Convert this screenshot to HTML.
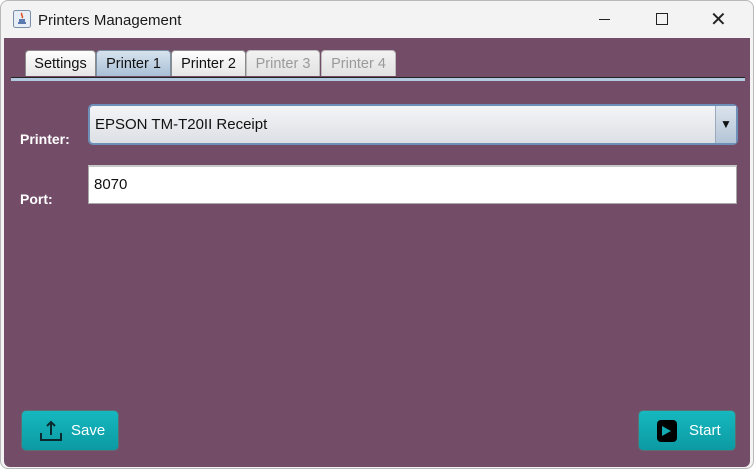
<!DOCTYPE html>
<html><head><style>
body{margin:0;width:754px;height:469px;background:#fff;font-family:"Liberation Sans",sans-serif;position:relative;overflow:hidden}
.win{position:absolute;left:0;top:0;width:752px;height:467px;border:1px solid #b8b8b8;border-radius:8px;background:#f3f3f3;overflow:hidden}
.title{position:absolute;left:37px;top:11px;font-size:15px;color:#1a1a1a}
.content{position:absolute;left:3px;top:37px;width:746px;height:429px;background:#734c68;border-radius:0 0 6px 6px}
.tab{position:absolute;top:12px;height:26px;border:1px solid #8a8a8a;border-bottom:none;border-radius:4px 4px 0 0;background:linear-gradient(#fdfdfd,#e6e6e6);font-size:14.5px;text-align:center;line-height:26px;color:#111;box-sizing:border-box}
.dis{color:#9a9a9a;background:linear-gradient(#f2f2f2,#e2e2e2);border-color:#bcbcbc}
.sel{background:linear-gradient(#d7e3ee,#a9c0d6);border-color:#7b8fa3}
.line{position:absolute;left:7px;top:39px;width:734px;height:3px;background:#b3c9df;border-top:1px solid #222}
.lbl{position:absolute;left:16px;color:#fff;font-weight:bold;font-size:14px}
.combo{position:absolute;left:84px;top:66px;width:650px;height:41px;box-sizing:border-box;border:2px solid #6e8fb8;border-radius:5px;background:linear-gradient(#f4f5f7,#dcdfe4);font-size:15px;line-height:37px;padding-left:5px;color:#111}
.arrow{position:absolute;right:0;top:0;width:20px;height:37px;border-left:1px solid #9aa9bb;background:linear-gradient(#dbe3ec,#b4c5d6);font-size:12px;text-align:center}
.field{position:absolute;left:84px;top:127px;width:649px;height:39px;box-sizing:border-box;border:1px solid #a8a8a8;border-top:2px solid #c8c8c8;background:#fff;font-size:15px;line-height:36px;padding-left:5px;color:#111}
.btn{position:absolute;top:373px;width:96px;height:39px;border-radius:4px;background:linear-gradient(#16b8bf,#0c9aa3);box-shadow:0 0 0 1px #5d6d72;color:#fff;font-size:15px;box-sizing:border-box}
</style></head><body>
<div class="win">
<svg style="position:absolute;left:12px;top:9px" width="18" height="18"><rect x="0.5" y="0.5" width="17" height="17" rx="2" fill="#e8eef5" stroke="#7a8ea8"/><path d="M5 12h8v2H5zM6 9h6v3H6z" fill="#5a7ab0"/><path d="M9 3c-2 2 2 3 0 5" stroke="#e05020" fill="none" stroke-width="1.5"/></svg>
<div class="title">Printers Management</div>
<div style="position:absolute;left:598px;top:18px;width:11px;height:1px;background:#222"></div>
<div style="position:absolute;left:655px;top:12px;width:10px;height:10px;border:1px solid #222"></div>
<div style="position:absolute;left:709px;top:6px;font-size:20px;color:#222">✕</div>
<div class="content">
<div class="tab" style="left:21px;width:71px">Settings</div>
<div class="tab sel" style="left:92px;width:75px">Printer 1</div>
<div class="tab" style="left:167px;width:75px">Printer 2</div>
<div class="tab dis" style="left:242px;width:74px">Printer 3</div>
<div class="tab dis" style="left:317px;width:75px">Printer 4</div>
<div class="line"></div>
<div class="lbl" style="top:93px">Printer:</div>
<div class="combo">EPSON TM-T20II Receipt<div class="arrow">▼</div></div>
<div class="lbl" style="top:153px">Port:</div>
<div class="field">8070</div>
<div class="btn" style="left:18px"><svg style="position:absolute;left:18px;top:9px" width="22" height="22"><path d="M11 2v13M7 6l4-4 4 4" stroke="#0a2a2e" stroke-width="2" fill="none"/><path d="M1 13v7h20v-7" stroke="#0a2a2e" stroke-width="2" fill="none"/></svg><span style="position:absolute;left:49px;top:11px">Save</span></div>
<div class="btn" style="left:635px"><svg style="position:absolute;left:17px;top:9px" width="22" height="22"><rect x="1" y="0" width="20" height="22" rx="4" fill="#000"/><path d="M6 6l9 5-9 5z" fill="#13aab2"/></svg><span style="position:absolute;left:50px;top:11px">Start</span></div>
</div>
</div>
</body></html>
